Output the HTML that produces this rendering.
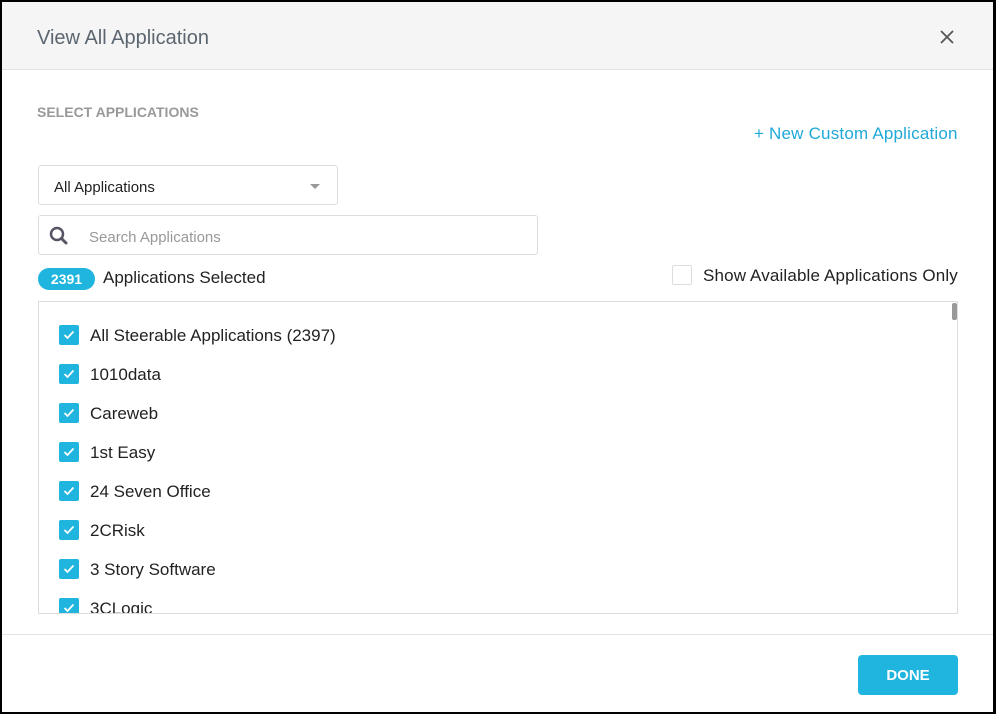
<!DOCTYPE html>
<html><head><style>
*{box-sizing:border-box;margin:0;padding:0}
body{width:996px;height:714px;background:#000;font-family:"Liberation Sans",sans-serif;position:relative;overflow:hidden}
.m{position:absolute;left:2px;top:2px;width:991px;height:710px;background:#fff}
.hd{position:absolute;left:0;top:0;width:991px;height:68px;background:#f5f5f5;border-bottom:1px solid #e3e3e3}
.a{position:absolute;white-space:nowrap}
.cb{position:absolute;left:57px;width:20px;height:20px;background:#1fb5de;border-radius:2px}
.cb svg{position:absolute;left:4px;top:5px}
.it{position:absolute;left:88px;font-size:17px;color:#222;margin-top:1px}
</style></head><body><div class="m">
<div class="hd"></div>
<div class="a" style="left:35px;top:25px;font-size:20px;color:#5c6670">View All Application</div>
<svg class="a" style="left:937px;top:27px" width="16" height="16"><path d="M2 2L14 14M14 2L2 14" stroke="#555" stroke-width="1.8"/></svg>
<div class="a" style="left:35px;top:102px;font-size:14px;font-weight:bold;color:#999">SELECT APPLICATIONS</div>
<div class="a" style="left:752px;top:122px;font-size:17px;color:#1fa9d8;letter-spacing:0.2px">+ New Custom Application</div>
<div class="a" style="left:36px;top:163px;width:300px;height:40px;border:1px solid #ddd;border-radius:3px"></div>
<div class="a" style="left:52px;top:177px;font-size:15px;color:#222">All Applications</div>
<div class="a" style="left:308px;top:182px;width:0;height:0;border-left:5px solid transparent;border-right:5px solid transparent;border-top:5px solid #999"></div>
<div class="a" style="left:36px;top:213px;width:500px;height:40px;border:1px solid #ddd;border-radius:3px"></div>
<svg class="a" style="left:47px;top:224px" width="20" height="20"><circle cx="8" cy="8" r="6" fill="none" stroke="#556" stroke-width="2.5"/><path d="M12.5 12.5L17 17" stroke="#556" stroke-width="3" stroke-linecap="round"/></svg>
<div class="a" style="left:87px;top:227px;font-size:15px;color:#999">Search Applications</div>
<div class="a" style="left:36px;top:266px;width:57px;height:22px;border-radius:11px;background:#1fb5de;color:#fff;font-size:14px;font-weight:bold;text-align:center;line-height:22px">2391</div>
<div class="a" style="left:101px;top:266px;font-size:17px;color:#222">Applications Selected</div>
<div class="a" style="left:670px;top:263px;width:20px;height:20px;border:1px solid #ddd;border-radius:2px"></div>
<div class="a" style="left:701px;top:264px;font-size:17px;color:#222;letter-spacing:0.15px">Show Available Applications Only</div>
<div class="a" style="left:36px;top:299px;width:920px;height:313px;border:1px solid #ddd;overflow:hidden">
<div class="a" style="left:913px;top:1px;width:5px;height:17px;background:#999;border-radius:2px"></div>
</div>
<div class="a" style="left:37px;top:300px;width:905px;height:311px;overflow:hidden">
<div style="position:relative;left:-37px;top:-300px">
<div class="cb" style="top:323px"><svg width="12" height="10"><path d="M1.5 5L4.5 8L10.5 1.5" fill="none" stroke="#fff" stroke-width="1.8"/></svg></div><div class="it" style="top:323px">All Steerable Applications (2397)</div>
<div class="cb" style="top:362px"><svg width="12" height="10"><path d="M1.5 5L4.5 8L10.5 1.5" fill="none" stroke="#fff" stroke-width="1.8"/></svg></div><div class="it" style="top:362px">1010data</div>
<div class="cb" style="top:401px"><svg width="12" height="10"><path d="M1.5 5L4.5 8L10.5 1.5" fill="none" stroke="#fff" stroke-width="1.8"/></svg></div><div class="it" style="top:401px">Careweb</div>
<div class="cb" style="top:440px"><svg width="12" height="10"><path d="M1.5 5L4.5 8L10.5 1.5" fill="none" stroke="#fff" stroke-width="1.8"/></svg></div><div class="it" style="top:440px">1st Easy</div>
<div class="cb" style="top:479px"><svg width="12" height="10"><path d="M1.5 5L4.5 8L10.5 1.5" fill="none" stroke="#fff" stroke-width="1.8"/></svg></div><div class="it" style="top:479px">24 Seven Office</div>
<div class="cb" style="top:518px"><svg width="12" height="10"><path d="M1.5 5L4.5 8L10.5 1.5" fill="none" stroke="#fff" stroke-width="1.8"/></svg></div><div class="it" style="top:518px">2CRisk</div>
<div class="cb" style="top:557px"><svg width="12" height="10"><path d="M1.5 5L4.5 8L10.5 1.5" fill="none" stroke="#fff" stroke-width="1.8"/></svg></div><div class="it" style="top:557px">3 Story Software</div>
<div class="cb" style="top:596px"><svg width="12" height="10"><path d="M1.5 5L4.5 8L10.5 1.5" fill="none" stroke="#fff" stroke-width="1.8"/></svg></div><div class="it" style="top:596px">3CLogic</div>
</div></div>
<div class="a" style="left:0;top:632px;width:991px;height:1px;background:#e3e3e3"></div>
<div class="a" style="left:856px;top:653px;width:100px;height:40px;background:#1fb5de;border-radius:4px;color:#fff;font-size:15px;font-weight:bold;text-align:center;line-height:42px">DONE</div>
</div></body></html>
